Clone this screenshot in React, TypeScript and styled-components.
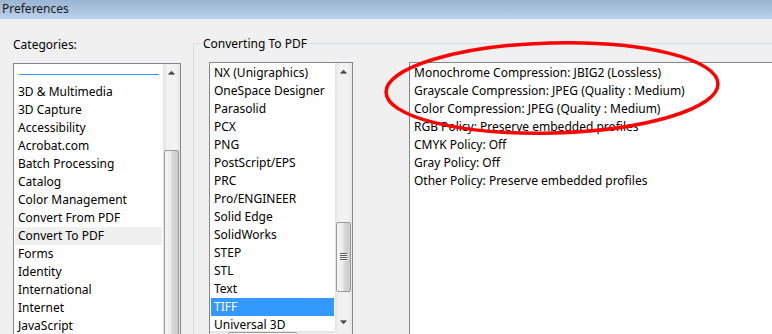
import React from 'react';
import styled, { createGlobalStyle } from 'styled-components';

const GlobalStyle = createGlobalStyle`
  html, body {
    margin: 0;
    padding: 0;
    background: #f0f0f0;
  }
  body {
    font-family: "Segoe UI", "Noto Sans", sans-serif;
    font-size: 12px;
    color: #000;
  }
`;

const Window = styled.div`
  position: relative;
  width: 772px;
  height: 334px;
  overflow: hidden;
  background: #f0f0f0;
  display: flex;
  flex-direction: column;
`;

const TitleBar = styled.div`
  flex: none;
  height: 19px;
  line-height: 17px;
  padding-left: 2px;
  background: linear-gradient(to bottom, #9ab4d4, #bbd2ea);
  color: #1a1a1a;
  font-size: 12px;
`;

const Body = styled.div`
  flex: 1;
  display: flex;
  align-items: flex-start;
  padding-left: 13px;
`;

const Sidebar = styled.div`
  flex: none;
  width: 168px;
  display: flex;
  flex-direction: column;
`;

const Label = styled.div`
  height: 17px;
  line-height: 17px;
  margin-top: 17px;
  margin-bottom: 10px;
`;

const ListBox = styled.div<{ $rows: string }>`
  box-sizing: border-box;
  border: 1px solid #828790;
  background: #fff;
  display: grid;
  grid-template-columns: 1fr 17px;
  grid-template-rows: ${p => p.$rows};
`;

const Items = styled.div`
  overflow: hidden;
  padding-top: 1px;
  white-space: nowrap;
`;

const Row = styled.div<{ $state?: 'selected' | 'active' }>`
  height: 18px;
  line-height: 18px;
  margin: 0 1px;
  padding-left: 3px;
  background: ${p =>
    p.$state === 'selected' ? '#3399ff' : p.$state === 'active' ? '#f0f0f0' : 'transparent'};
  color: ${p => (p.$state === 'selected' ? '#fff' : '#000')};
`;

const Separator = styled.div`
  height: 18px;
  margin: 0 4px 0 5px;
  display: flex;
  align-items: center;
  &::after {
    content: '';
    flex: 1;
    height: 1px;
    background: #3399ff;
  }
`;

const VScroll = styled.div`
  display: flex;
  flex-direction: column;
  background: linear-gradient(to right, #e3e3e3, #f2f2f2 25%, #f2f2f2 75%, #e8e8e8);
  overflow: hidden;
`;

const HScroll = styled.div`
  display: flex;
  background: linear-gradient(to bottom, #e3e3e3, #f2f2f2 25%, #f2f2f2 75%, #e8e8e8);
  overflow: hidden;
`;

const Corner = styled.div`
  background: #f0f0f0;
`;

const ArrowButton = styled.div`
  flex: none;
  width: 17px;
  height: 17px;
  display: flex;
  align-items: center;
  justify-content: center;
`;

const Gap = styled.div<{ $size: number }>`
  flex: none;
  height: ${p => p.$size}px;
  width: ${p => p.$size}px;
`;

const Fill = styled.div`
  flex: 1;
`;

const Thumb = styled.div<{ $size: number; $horizontal?: boolean }>`
  flex: none;
  box-sizing: border-box;
  ${p => (p.$horizontal ? `width: ${p.$size}px;` : `height: ${p.$size}px;`)}
  margin: ${p => (p.$horizontal ? '1px 0' : '0 1px')};
  border: 1px solid #9a9a9a;
  border-radius: 2px;
  background: linear-gradient(
    ${p => (p.$horizontal ? 'to bottom' : 'to right')},
    #f6f6f6 0%,
    #ececec 45%,
    #d8d8d8 55%,
    #cbcbcb 100%
  );
  display: flex;
  align-items: center;
  justify-content: center;
`;

const Grip = styled.span`
  width: 7px;
  height: 8px;
  background: repeating-linear-gradient(to bottom, #5a5a5a 0 1px, #f4f4f4 1px 2px);
`;

const GroupBox = styled.fieldset`
  flex: none;
  box-sizing: border-box;
  width: 640px;
  height: 330px;
  margin: 16px 0 0 12px;
  padding: 10px 0 0 15px;
  border: 1px solid #d5dfe5;
  border-radius: 3px;
  display: flex;
  align-items: flex-start;
  min-width: 0;
`;

const Legend = styled.legend`
  height: 17px;
  line-height: 17px;
  padding: 0 2px;
  margin-left: -8px;
`;

const FormatList = styled.div`
  flex: none;
  width: 144px;
  height: 300px;
`;

const InfoBox = styled.div`
  flex: 1;
  margin-left: 56px;
  height: 300px;
  border: 1px solid #828790;
  background: #fff;
  padding: 1px 0 0 4px;
`;

const InfoLine = styled.div`
  height: 18px;
  line-height: 18px;
  white-space: nowrap;
`;

const Highlight = styled.svg`
  position: absolute;
  left: 0;
  top: 0;
  pointer-events: none;
`;

function Arrow({ dir }: { dir: 'up' | 'down' | 'left' | 'right' }) {
  const rot = { up: 0, down: 180, left: -90, right: 90 }[dir];
  return (
    <svg width="7" height="7" viewBox="0 0 7 7">
      <defs>
        <linearGradient id={`ag-${dir}`} x1="0" y1="0" x2="0" y2="1">
          <stop offset="0" stopColor="#8a8a8a" />
          <stop offset="1" stopColor="#262626" />
        </linearGradient>
      </defs>
      <polygon
        points="3.5,1.5 7,5.5 0,5.5"
        fill={`url(#ag-${dir})`}
        transform={`rotate(${rot} 3.5 3.5)`}
      />
    </svg>
  );
}

const categories = [
  '3D & Multimedia',
  '3D Capture',
  'Accessibility',
  'Acrobat.com',
  'Batch Processing',
  'Catalog',
  'Color Management',
  'Convert From PDF',
  'Convert To PDF',
  'Forms',
  'Identity',
  'International',
  'Internet',
  'JavaScript',
  'Measuring (2D)',
];

const formats = [
  'NX (Unigraphics)',
  'OneSpace Designer',
  'Parasolid',
  'PCX',
  'PNG',
  'PostScript/EPS',
  'PRC',
  'Pro/ENGINEER',
  'Solid Edge',
  'SolidWorks',
  'STEP',
  'STL',
  'Text',
  'TIFF',
  'Universal 3D',
];

const settings = [
  'Monochrome Compression: JBIG2 (Lossless)',
  'Grayscale Compression: JPEG (Quality : Medium)',
  'Color Compression: JPEG (Quality : Medium)',
  'RGB Policy: Preserve embedded profiles',
  'CMYK Policy: Off',
  'Gray Policy: Off',
  'Other Policy: Preserve embedded profiles',
];

export default function App() {
  return (
    <>
      <GlobalStyle />
      <Window>
        <TitleBar>Preferences</TitleBar>
        <Body>
          <Sidebar>
            <Label>Categories:</Label>
            <ListBox $rows="300px">
              <Items>
                <Separator />
                {categories.map(c => (
                  <Row key={c} $state={c === 'Convert To PDF' ? 'active' : undefined}>
                    {c}
                  </Row>
                ))}
              </Items>
              <VScroll>
                <ArrowButton>
                  <Arrow dir="up" />
                </ArrowButton>
                <Gap $size={69} />
                <Thumb $size={200} />
                <Fill />
              </VScroll>
            </ListBox>
          </Sidebar>

          <GroupBox>
            <Legend>Converting To PDF</Legend>
            <FormatList>
              <ListBox $rows="268px 17px">
                <Items>
                  {formats.map(f => (
                    <Row key={f} $state={f === 'TIFF' ? 'selected' : undefined}>
                      {f}
                    </Row>
                  ))}
                </Items>
                <VScroll>
                  <ArrowButton>
                    <Arrow dir="up" />
                  </ArrowButton>
                  <Gap $size={142} />
                  <Thumb $size={70}>
                    <Grip />
                  </Thumb>
                  <Fill />
                  <ArrowButton>
                    <Arrow dir="down" />
                  </ArrowButton>
                </VScroll>
                <HScroll>
                  <ArrowButton>
                    <Arrow dir="left" />
                  </ArrowButton>
                  <Gap $size={1} />
                  <Thumb $size={69} $horizontal />
                  <Fill />
                  <ArrowButton>
                    <Arrow dir="right" />
                  </ArrowButton>
                </HScroll>
                <Corner />
              </ListBox>
            </FormatList>
            <InfoBox>
              {settings.map(s => (
                <InfoLine key={s}>{s}</InfoLine>
              ))}
            </InfoBox>
          </GroupBox>
        </Body>

        <Highlight width="772" height="334" viewBox="0 0 772 334">
          <ellipse
            cx="552"
            cy="88"
            rx="166"
            ry="45"
            fill="none"
            stroke="#ff0000"
            strokeWidth="3.5"
            transform="rotate(-1.5 552 88)"
          />
        </Highlight>
      </Window>
    </>
  );
}
